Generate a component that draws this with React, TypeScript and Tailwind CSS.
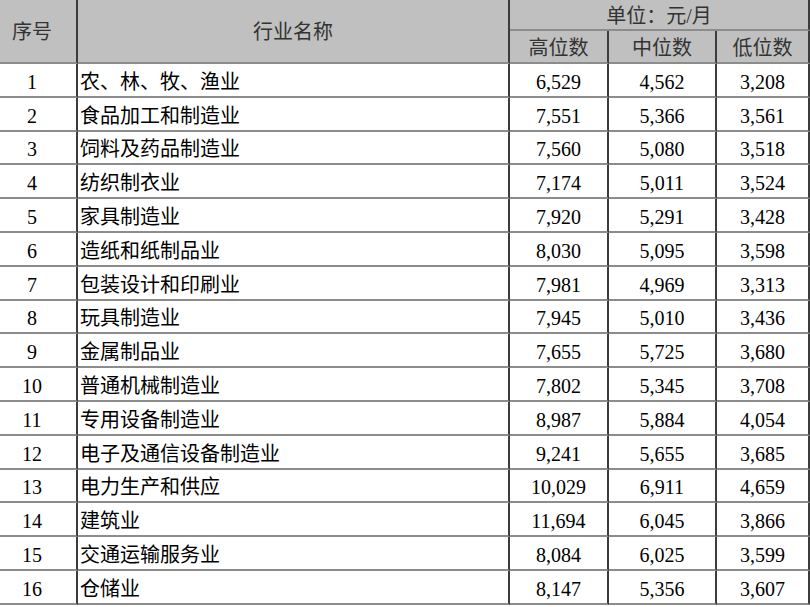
const rows: [number, string, string, string, string][] = [
  [1, "农、林、牧、渔业", "6,529", "4,562", "3,208"],
  [2, "食品加工和制造业", "7,551", "5,366", "3,561"],
  [3, "饲料及药品制造业", "7,560", "5,080", "3,518"],
  [4, "纺织制衣业", "7,174", "5,011", "3,524"],
  [5, "家具制造业", "7,920", "5,291", "3,428"],
  [6, "造纸和纸制品业", "8,030", "5,095", "3,598"],
  [7, "包装设计和印刷业", "7,981", "4,969", "3,313"],
  [8, "玩具制造业", "7,945", "5,010", "3,436"],
  [9, "金属制品业", "7,655", "5,725", "3,680"],
  [10, "普通机械制造业", "7,802", "5,345", "3,708"],
  [11, "专用设备制造业", "8,987", "5,884", "4,054"],
  [12, "电子及通信设备制造业", "9,241", "5,655", "3,685"],
  [13, "电力生产和供应", "10,029", "6,911", "4,659"],
  [14, "建筑业", "11,694", "6,045", "3,866"],
  [15, "交通运输服务业", "8,084", "6,025", "3,599"],
  [16, "仓储业", "8,147", "5,356", "3,607"],
];

const cols = "grid grid-cols-[78px_432px_99px_108px_1fr]";
const cell = "flex items-center border-r-2 border-r-[#3c3c3c] border-b-2 border-b-[#8c8c8c]";

export default function App() {
  return (
    <div
      className="w-[810px] h-[607px] overflow-hidden bg-white text-[20px] leading-none"
      style={{ fontFamily: '"Liberation Serif", "Noto Sans CJK SC", serif' }}
    >
      <div className={`${cols} grid-rows-[31px_33px] bg-[#c0c0c0] text-[#333]`}>
        <div className={`${cell} row-span-2 justify-center pr-[12px] pt-[2px]`}>序号</div>
        <div className={`${cell} row-span-2 justify-center pt-[2px]`}>行业名称</div>
        <div className={`${cell} col-span-3 justify-center border-b-[#3c3c3c] border-r-0 pt-[2px]`}>单位：元/月</div>
        <div className={`${cell} justify-center pt-[2px]`}>高位数</div>
        <div className={`${cell} justify-center pt-[2px]`}>中位数</div>
        <div className={`${cell} justify-center border-r-0 pt-[2px]`}>低位数</div>
      </div>
      {rows.map(([no, name, high, mid, low]) => (
        <div key={no} className={`${cols} h-[33.8px] text-black`}>
          <div className={`${cell} justify-center pr-[12px] pt-[4px]`}>{no}</div>
          <div className={`${cell} pl-[2px] pt-[4px]`}>{name}</div>
          <div className={`${cell} justify-center pt-[4px]`}>{high}</div>
          <div className={`${cell} justify-center pt-[4px]`}>{mid}</div>
          <div className={`${cell} justify-center border-r-0 pt-[4px]`}>{low}</div>
        </div>
      ))}
    </div>
  );
}
